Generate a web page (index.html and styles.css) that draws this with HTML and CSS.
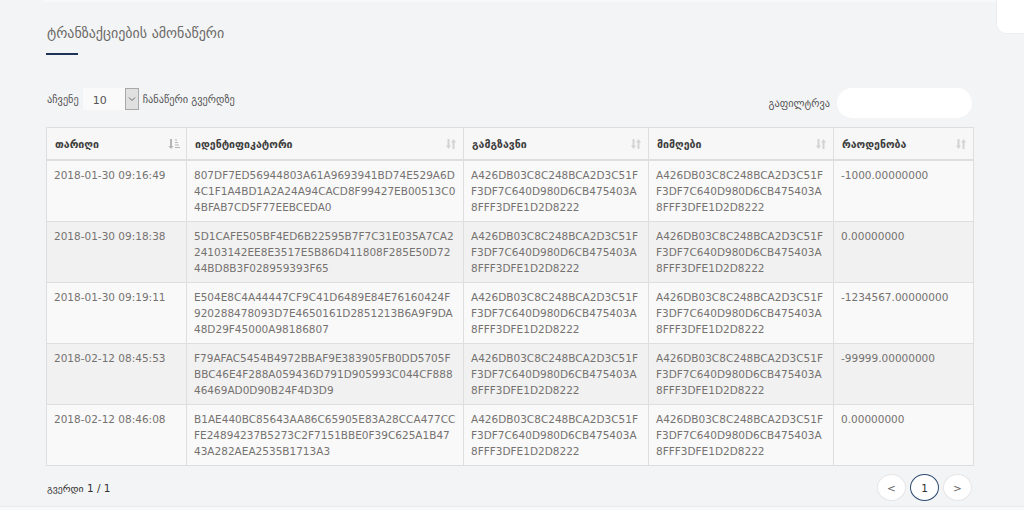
FILE: index.html
```html
<!DOCTYPE html>
<html lang="ka">
<head>
<meta charset="utf-8">
<title>ტრანზაქციების ამონაწერი</title>
<link rel="stylesheet" href="styles.css">
</head>
<body>
<div class="topbar"></div>
<div class="corner"></div>
<main class="page">
  <h1 class="title">ტრანზაქციების ამონაწერი</h1>
  <div class="title-line"></div>

  <div class="controls">
    <div class="length">
      <span>აჩვენე</span>
      <span class="select"><span class="select-val">10</span><span class="select-btn"><svg width="8" height="6" viewBox="0 0 8 6"><path d="M1 1.5 L4 4.5 L7 1.5" fill="none" stroke="#666" stroke-width="1"/></svg></span></span>
      <span>ჩანაწერი გვერდზე</span>
    </div>
    <div class="filter">
      <span>გაფილტრვა</span>
      <span class="search"></span>
    </div>
  </div>

  <table class="grid">
    <colgroup>
      <col class="c-date"><col class="c-id"><col class="c-addr"><col class="c-addr"><col class="c-amt">
    </colgroup>
    <thead>
      <tr>
        <th><div class="th"><span>თარიღი</span><svg class="sort active" width="12" height="12" viewBox="0 0 12 12"><path d="M3 1 V10" stroke="#b5b5b5" stroke-width="2"/><path d="M0.5 8 L3 11 L5.5 8 Z" fill="#b5b5b5"/><path d="M7 2 H9 M7 4.5 H10 M7 7 H11 M7 9.5 H12" stroke="#b5b5b5" stroke-width="1.2"/></svg></div></th>
        <th><div class="th"><span>იდენტიფიკატორი</span><svg class="sort" width="12" height="12" viewBox="0 0 12 12"><path d="M3.5 1 V9" stroke="#d3d3d3" stroke-width="2"/><path d="M1 7.5 L3.5 11 L6 7.5 Z" fill="#d3d3d3"/><path d="M8.5 3 V11" stroke="#d3d3d3" stroke-width="2"/><path d="M6 4.5 L8.5 1 L11 4.5 Z" fill="#d3d3d3"/></svg></div></th>
        <th><div class="th"><span>გამგზავნი</span><svg class="sort" width="12" height="12" viewBox="0 0 12 12"><path d="M3.5 1 V9" stroke="#d3d3d3" stroke-width="2"/><path d="M1 7.5 L3.5 11 L6 7.5 Z" fill="#d3d3d3"/><path d="M8.5 3 V11" stroke="#d3d3d3" stroke-width="2"/><path d="M6 4.5 L8.5 1 L11 4.5 Z" fill="#d3d3d3"/></svg></div></th>
        <th><div class="th"><span>მიმღები</span><svg class="sort" width="12" height="12" viewBox="0 0 12 12"><path d="M3.5 1 V9" stroke="#d3d3d3" stroke-width="2"/><path d="M1 7.5 L3.5 11 L6 7.5 Z" fill="#d3d3d3"/><path d="M8.5 3 V11" stroke="#d3d3d3" stroke-width="2"/><path d="M6 4.5 L8.5 1 L11 4.5 Z" fill="#d3d3d3"/></svg></div></th>
        <th><div class="th"><span>რაოდენობა</span><svg class="sort" width="12" height="12" viewBox="0 0 12 12"><path d="M3.5 1 V9" stroke="#d3d3d3" stroke-width="2"/><path d="M1 7.5 L3.5 11 L6 7.5 Z" fill="#d3d3d3"/><path d="M8.5 3 V11" stroke="#d3d3d3" stroke-width="2"/><path d="M6 4.5 L8.5 1 L11 4.5 Z" fill="#d3d3d3"/></svg></div></th>
      </tr>
    </thead>
    <tbody>
      <tr>
        <td>2018-01-30 09:16:49</td>
        <td>807DF7ED56944803A61A9693941BD74E529A6D4C1F1A4BD1A2A24A94CACD8F99427EB00513C04BFAB7CD5F77EEBCEDA0</td>
        <td>A426DB03C8C248BCA2D3C51FF3DF7C640D980D6CB475403A8FFF3DFE1D2D8222</td>
        <td>A426DB03C8C248BCA2D3C51FF3DF7C640D980D6CB475403A8FFF3DFE1D2D8222</td>
        <td>-1000.00000000</td>
      </tr>
      <tr>
        <td>2018-01-30 09:18:38</td>
        <td>5D1CAFE505BF4ED6B22595B7F7C31E035A7CA224103142EE8E3517E5B86D411808F285E50D7244BD8B3F028959393F65</td>
        <td>A426DB03C8C248BCA2D3C51FF3DF7C640D980D6CB475403A8FFF3DFE1D2D8222</td>
        <td>A426DB03C8C248BCA2D3C51FF3DF7C640D980D6CB475403A8FFF3DFE1D2D8222</td>
        <td>0.00000000</td>
      </tr>
      <tr>
        <td>2018-01-30 09:19:11</td>
        <td>E504E8C4A44447CF9C41D6489E84E76160424F920288478093D7E4650161D2851213B6A9F9DA48D29F45000A98186807</td>
        <td>A426DB03C8C248BCA2D3C51FF3DF7C640D980D6CB475403A8FFF3DFE1D2D8222</td>
        <td>A426DB03C8C248BCA2D3C51FF3DF7C640D980D6CB475403A8FFF3DFE1D2D8222</td>
        <td>-1234567.00000000</td>
      </tr>
      <tr>
        <td>2018-02-12 08:45:53</td>
        <td>F79AFAC5454B4972BBAF9E383905FB0DD5705FBBC46E4F288A059436D791D905993C044CF88846469AD0D90B24F4D3D9</td>
        <td>A426DB03C8C248BCA2D3C51FF3DF7C640D980D6CB475403A8FFF3DFE1D2D8222</td>
        <td>A426DB03C8C248BCA2D3C51FF3DF7C640D980D6CB475403A8FFF3DFE1D2D8222</td>
        <td>-99999.00000000</td>
      </tr>
      <tr>
        <td>2018-02-12 08:46:08</td>
        <td>B1AE440BC85643AA86C65905E83A28CCA477CCFE24894237B5273C2F7151BBE0F39C625A1B4743A282AEA2535B1713A3</td>
        <td>A426DB03C8C248BCA2D3C51FF3DF7C640D980D6CB475403A8FFF3DFE1D2D8222</td>
        <td>A426DB03C8C248BCA2D3C51FF3DF7C640D980D6CB475403A8FFF3DFE1D2D8222</td>
        <td>0.00000000</td>
      </tr>
    </tbody>
  </table>

  <div class="footer-row">
    <div class="info"><span class="ka">გვერდი</span> 1 / 1</div>
    <div class="pager">
      <span class="pg">&lt;</span>
      <span class="pg current">1</span>
      <span class="pg">&gt;</span>
    </div>
  </div>
</main>
<div class="bottom"></div>
</body>
</html>
```

FILE: styles.css
```css
html, body {
  margin: 0;
  padding: 0;
}
body {
  background: #f3f4f6;
  font-family: "DejaVu Sans", "Noto Sans", sans-serif;
  color: #777;
  width: 1024px;
  height: 510px;
  overflow: hidden;
  position: relative;
}
.topbar {
  height: 2px;
  margin-left: 44px;
  background: #f8f9fa;
}
.corner {
  position: absolute;
  top: 0;
  right: 0;
  width: 27px;
  height: 33px;
  background: #fff;
  border-bottom-left-radius: 10px;
  border: 1px solid #eceef0;
  border-top: none;
  border-right: none;
}
.page {
  padding: 0 51px 0 46px;
}
.title {
  margin: 0;
  padding-top: 21px;
  font-size: 14px;
  font-weight: normal;
  color: #6b6a66;
  line-height: 20px;
  padding-left: 1px;
}
.title-line {
  width: 32px;
  height: 2px;
  background: #1d3358;
  margin-top: 10px;
}
.controls {
  display: flex;
  justify-content: space-between;
  align-items: flex-start;
  margin-top: 33px;
  font-size: 10.3px;
  color: #555;
}
.length {
  display: flex;
  align-items: center;
  height: 22px;
  padding-left: 1px;
}
.select {
  display: flex;
  margin: 0 4px 0 4px;
  height: 22px;
}
.select-val {
  width: 42px;
  background: #fafafa;
  color: #555;
  font-size: 11px;
  line-height: 22px;
  text-indent: 10px;
  display: flex;
  align-items: center;
  box-sizing: border-box;
  padding-top: 3px;
}
.select-btn {
  width: 14px;
  box-sizing: border-box;
  background: #e0e0e0;
  border: 1px solid #a8a8a8;
  display: flex;
  align-items: center;
  justify-content: center;
}
.filter {
  display: flex;
  align-items: center;
  gap: 7px;
  height: 30px;
  padding-right: 1px;
}
.search {
  width: 135px;
  height: 30px;
  background: #fff;
  border-radius: 15px;
}
.grid {
  margin-top: 9px;
  width: 927px;
  border-collapse: collapse;
  table-layout: fixed;
  font-size: 10.5px;
  line-height: 16px;
  border: 1px solid #dedede;
}
.c-date { width: 140px; }
.c-id { width: 277px; }
.c-addr { width: 185px; }
.c-amt { width: 140px; }
.grid th {
  background: #f7f7f7;
  border: 1px solid #dedede;
  border-bottom: 2px solid #dedede;
  padding: 0 6px 0 8px;
  height: 31px;
  text-align: left;
  color: #3d3d3d;
  font-weight: bold;
  font-size: 10.6px;
}
.th {
  display: flex;
  justify-content: space-between;
  align-items: center;
}
.sort {
  flex: none;
}
.grid td {
  border: 1px solid #dedede;
  padding: 6px 7.5px 6px 7px;
  height: 48px;
  vertical-align: top;
  word-break: break-all;
  color: #757270;
}
.grid tbody tr:nth-child(odd) td {
  background: #f9f9f9;
}
.grid tbody tr:nth-child(even) td {
  background: #f1f1f1;
}
.footer-row {
  display: flex;
  justify-content: space-between;
  align-items: center;
  margin-top: 8px;
  padding-left: 1px;
}
.info {
  font-size: 10.5px;
  color: #333;
}
.info .ka {
  font-size: 9.8px;
}
.pager {
  display: flex;
  gap: 4px;
  margin-right: 1px;
}
.pg {
  width: 29px;
  height: 27px;
  box-sizing: border-box;
  border-radius: 50%;
  background: #fff;
  border: 1px solid #e6e6e6;
  display: flex;
  align-items: center;
  justify-content: center;
  font-size: 10.5px;
  color: #666;
}
.pg.current {
  border: 1px solid #2c4a70;
  color: #333;
}
.bottom {
  position: absolute;
  left: 0;
  right: 0;
  bottom: 0;
  height: 3px;
  background: #f8f9fa;
  border-top: 1px solid #e9eaec;
}
```
